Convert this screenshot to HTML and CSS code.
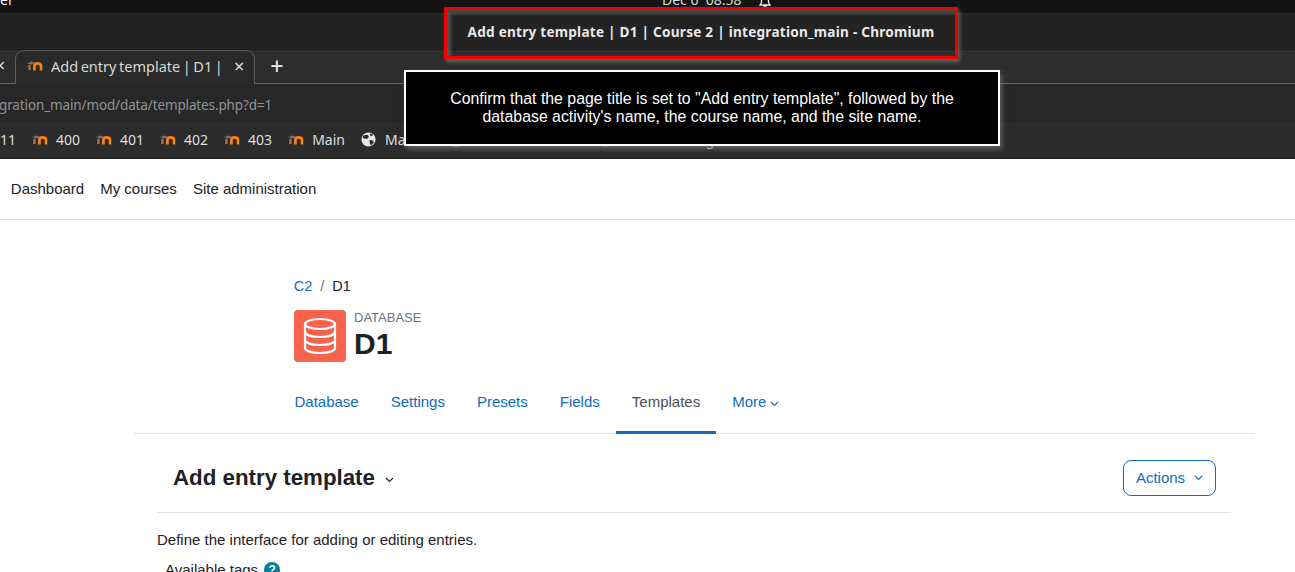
FILE: index.html
```html
<!DOCTYPE html>
<html lang="en">
<head>
<meta charset="utf-8">
<title>Add entry template</title>
<link rel="stylesheet" href="styles.css">
</head>
<body>
<svg class="defs" width="0" height="0" aria-hidden="true">
  <symbol id="moodle" viewBox="0 0 16 12">
    <path d="M2.400 5V10" fill="none" stroke="#b56a2c" stroke-width="2.400"/>
    <path d="M0 3.600 4.500 1.600 8 2.800 4 4.800C2.800 4.200 1.400 3.800 0 3.600z" fill="#77716b"/>
    <path d="M7.400 10.500V6C7.400 4.400 8.600 3.400 10.500 3.400S14 4.400 14 6v4.500" fill="none" stroke="#f98012" stroke-width="2.700"/>
  </symbol>
</svg>

<header class="chrome">
  <div class="topbar">
    <span class="topbar-left">er</span>
    <span class="clock">Dec 6&nbsp; 08:58</span>
    <svg class="bell" width="14" height="14" viewBox="0 0 14 14"><path d="M7 -4C4.500 -4 3.500 -2 3.500 1v1.500L2 5h10L10.500 2.500V1C10.500 -2 9.500 -4 7 -4zM5.500 6h3" fill="none" stroke="#eee" stroke-width="1.300"/></svg>
  </div>
  <div class="titlebar"></div>
  <div class="tabstrip">
    <span class="tab-prev">×</span>
    <div class="tab">
      <svg class="fav" width="16" height="12"><use href="#moodle"/></svg>
      <span class="tab-title">Add entry template | D1 |</span>
      <span class="tab-close">×</span>
    </div>
    <span class="tab-new">+</span>
  </div>
  <div class="urlbar">gration_main/mod/data/templates.php?d=1</div>
  <div class="bookmarks">
    <span class="bm bm-first">11</span>
    <span class="bm"><svg class="fav" width="16" height="12"><use href="#moodle"/></svg>400</span>
    <span class="bm"><svg class="fav" width="16" height="12"><use href="#moodle"/></svg>401</span>
    <span class="bm"><svg class="fav" width="16" height="12"><use href="#moodle"/></svg>402</span>
    <span class="bm"><svg class="fav" width="16" height="12"><use href="#moodle"/></svg>403</span>
    <span class="bm"><svg class="fav" width="16" height="12"><use href="#moodle"/></svg>Main</span>
    <span class="bm"><svg class="globe" width="15" height="15" viewBox="0 0 16 16"><circle cx="8" cy="8" r="7.500" fill="#e8e8e8"/><path d="M3 3.500 7 3l1.500 2L6.500 7.500 3.500 7 1.500 6zM9 8.500l4 .5.500 2.500L11 14.500 9.500 12.500zM9.500 1.500 13 3l-1.500 1.500L9.500 3.500z" fill="#2c2c2c"/></svg>Main</span>
    <span class="bm-dot bm-dot-orange"></span>
    <span class="bm-dot bm-dot-purple"></span>
    <span class="bm-tail">g</span>
  </div>
</header>

<nav class="sitenav">
  <a>Dashboard</a>
  <a>My courses</a>
  <a>Site administration</a>
</nav>

<main class="page">
  <div class="course-head">
    <div class="crumbs"><a class="link">C2</a><span class="sep">/</span><span>D1</span></div>
    <div class="activity">
      <div class="activity-icon">
        <svg width="34" height="38" viewBox="0 0 34 38" fill="none" stroke="#fff" stroke-width="2.200">
          <ellipse cx="17" cy="7" rx="15" ry="5"/>
          <path d="M2 7v24c0 3 6.700 5 15 5s15-2 15-5V7"/>
          <path d="M2 15c0 3 6.700 5 15 5s15-2 15-5M2 23c0 3 6.700 5 15 5s15-2 15-5"/>
        </svg>
      </div>
      <div>
        <div class="activity-type">DATABASE</div>
        <h1 class="activity-name">D1</h1>
      </div>
    </div>
  </div>

  <div class="tabs">
    <a class="tablink">Database</a>
    <a class="tablink">Settings</a>
    <a class="tablink">Presets</a>
    <a class="tablink">Fields</a>
    <a class="tablink active">Templates</a>
    <a class="tablink">More<svg class="chev-small" width="9" height="6" viewBox="0 0 9 6"><path d="M1 1l3.500 3.500L8 1" fill="none" stroke="#0f6cbf" stroke-width="1.100"/></svg></a>
  </div>

  <div class="content">
    <div class="heading-row">
      <h2 class="heading">Add entry template<svg class="chev-head" width="9" height="6" viewBox="0 0 9 6"><path d="M1 1l3.500 3.500L8 1" fill="none" stroke="#1d2125" stroke-width="1.200"/></svg></h2>
      <button class="actions">Actions<svg class="chev-btn" width="9" height="6" viewBox="0 0 9 6"><path d="M1 1l3.500 3.500L8 1" fill="none" stroke="#0f6cbf" stroke-width="1.100"/></svg></button>
    </div>
    <p class="intro">Define the interface for adding or editing entries.</p>
    <div class="tags">Available tags<span class="help">?</span></div>
  </div>
</main>

<div class="title-callout">Add entry template | D1 | Course 2 | integration_main - Chromium</div>
<div class="tooltip">Confirm that the page title is set to "Add entry template", followed by the database activity's name, the course name, and the site name.</div>
</body>
</html>
```

FILE: styles.css
```css
html, body { margin: 0; padding: 0; }
body {
  width: 1295px;
  height: 572px;
  overflow: hidden;
  position: relative;
  background: #fff;
  font-family: "Liberation Sans", Arial, sans-serif;
  font-size: 15px;
  color: #1d2125;
}
.defs { position: absolute; }

.chrome { font-family: "Noto Sans", "Open Sans", sans-serif; color: #dcdcdc; background: #2c2c2c; }
.topbar {
  height: 13px;
  background: #141414;
  display: flex;
  position: relative;
  overflow: hidden;
  font-size: 14px;
  line-height: 10px;
}
.topbar-left { margin-top: -5px; color: #eee; }
.clock { position: absolute; left: 662px; top: -5px; color: #ddd; }
.bell { position: absolute; left: 758px; top: 0; }
.titlebar {
  height: 37px;
  box-sizing: border-box;
  background: #232323;
  border-top: 1px solid #2a2a2a;
  border-bottom: 1px solid #1a1a1a;
}
.tabstrip {
  height: 34px;
  box-sizing: border-box;
  background: #2d2d2d;
  border-bottom: 1px solid #6a6a6a;
  display: flex;
  align-items: flex-start;
  position: relative;
}
.tab-prev { position: absolute; left: -5px; top: 3px; font-size: 18px; line-height: 24px; color: #ddd; }
.tab {
  margin-left: 15px;
  width: 240px;
  height: 34px;
  box-sizing: border-box;
  border: 1px solid #5c5c5c;
  border-bottom: 1px solid #2a2a2a;
  border-radius: 9px 9px 0 0;
  background: #2a2a2a;
  display: flex;
  align-items: center;
  padding: 0 0 2px 11px;
  font-size: 14.500px;
}
.fav { flex: none; }
.tab-title { margin-left: 8px; white-space: nowrap; width: 183px; overflow: hidden; color: #d8d8d8; word-spacing: -1.200px; }
.tab-close { font-size: 18px; color: #e4e4e4; }
.tab-new { margin-left: 15px; font-size: 24px; line-height: 32px; color: #eee; font-weight: 400; }
.urlbar {
  height: 38px;
  box-sizing: border-box;
  background: #272727;
  font-size: 13.500px;
  letter-spacing: -.13px;
  line-height: 42px;
  color: #8f9396;
  white-space: nowrap;
  text-indent: -1px;
}
.bookmarks {
  height: 37px;
  box-sizing: border-box;
  background: #2c2c2c;
  border-bottom: 1px solid #1b1b1b;
  display: flex;
  align-items: center;
  font-size: 14px;
  color: #dedede;
  padding-bottom: 1px;
}
.bm { display: flex; align-items: center; margin-right: 16px; }
.bm-first { margin-right: 15px; width: 17px; }
.bm .fav { margin-right: 8px; }
.globe { margin-right: 9px; }
.bm-dot { flex: none; width: 14px; height: 14px; border-radius: 50%; margin-top: 1px; }
.bm-dot-orange { background: #e8793a; margin-left: 15px; }
.bm-dot-purple { background: #8c5aa8; margin-left: 135px; }
.bm-tail { margin-left: 94px; }

.sitenav {
  height: 60px;
  box-sizing: border-box;
  padding: 0 0 2px 10.800px;
  border-bottom: 1px solid #dee2e6;
  display: flex;
  align-items: center;
  gap: 16px;
  margin-top: 1px;
}

.page { padding-left: 134px; padding-right: 41px; }
.course-head { padding: 57px 0 0 160px; }
.crumbs { display: flex; gap: 8px; font-size: 14.500px; line-height: 18px; margin-left: -.3px; }
.link { color: #0f6cbf; }
.sep { color: #6a737b; }
.activity { display: flex; gap: 8px; margin-top: 15px; }
.activity-icon {
  width: 52px;
  height: 52px;
  border-radius: 4px;
  background: #f7634d;
  display: flex;
  align-items: center;
  justify-content: center;
}
.activity-type { font-size: 13px; line-height: 14px; color: #6a737b; margin-top: 1px; }
.activity-name { margin: 0; font-size: 30px; line-height: 38px; font-weight: 700; }

.tabs {
  display: flex;
  height: 64px;
  margin-top: 7px;
  padding-left: 144.500px;
  border-bottom: 1px solid #dee2e6;
  box-sizing: border-box;
}
.tablink {
  padding: 0 16px;
  color: #0f6cbf;
  line-height: 63px;
  height: 64px;
  box-sizing: border-box;
  white-space: nowrap;
}
.tablink.active { color: #495057; border-bottom: 3px solid #0f6cbf; }
.chev-small { margin-left: 4px; vertical-align: 0; }

.content { padding: 0 23px; }
.heading-row {
  height: 79px;
  box-sizing: border-box;
  border-bottom: 1px solid #dee2e6;
  display: flex;
  align-items: center;
  justify-content: space-between;
  padding: 10px 15px 0 16px;
}
.heading { margin: 0; font-size: 22.300px; font-weight: 700; }
.chev-head { margin-left: 10px; vertical-align: 2px; }
.actions {
  width: 93px;
  height: 36px;
  background: #fff;
  border: 1px solid #0f6cbf;
  border-radius: 8px;
  color: #0f6cbf;
  font: inherit;
  padding: 0 0 2px;
}
.chev-btn { margin-left: 9px; vertical-align: 2px; }
.intro { margin: 18px 0 0; line-height: 18px; }
.tags { margin: 12px 0 0 8px; line-height: 18px; display: flex; align-items: center; }
.help {
  width: 16px;
  height: 16px;
  margin-left: 6px;
  border-radius: 50%;
  background: #008196;
  color: #fff;
  font-size: 12px;
  font-weight: 700;
  line-height: 16px;
  text-align: center;
}

.title-callout {
  position: absolute;
  left: 444px;
  top: 7px;
  width: 514px;
  height: 52px;
  box-sizing: border-box;
  border: 3px solid #f00000;
  box-shadow: 2px 3px 4px rgba(120,120,120,.75), inset 4px 4px 3px rgba(110,110,110,.6);
  font-family: "Noto Sans", "Open Sans", sans-serif;
  font-size: 13.600px;
  font-weight: 700;
  line-height: 44px;
  letter-spacing: .24px;
  text-align: center;
  color: #e8e8e8;
  white-space: nowrap;
}
.tooltip {
  position: absolute;
  left: 404px;
  top: 70px;
  width: 596px;
  height: 76px;
  box-sizing: border-box;
  border: 2px solid #fff;
  background: #000;
  color: #fff;
  box-shadow: 2px 3px 5px rgba(120,120,120,.7);
  font-size: 15.850px;
  line-height: 18px;
  text-align: center;
  padding: 18px 40px 0;
}
```
